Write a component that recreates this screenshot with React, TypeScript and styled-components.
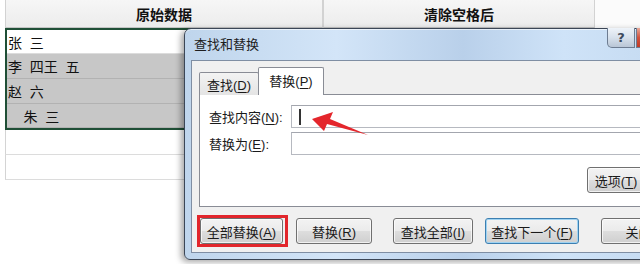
import React from 'react'
import styled, { createGlobalStyle, css } from 'styled-components'

const FONT = `"Liberation Sans", "Noto Sans CJK SC", sans-serif`
const FRAME_BORDER = '#3b4656'
const TAB_BORDER = '#898c95'

const GlobalStyle = createGlobalStyle`
  html, body {
    margin: 0;
    padding: 0;
    background: #ffffff;
  }
  body {
    font-family: ${FONT};
    color: #1a1a1a;
  }
`

const Page = styled.div`
  position: relative;
  width: 640px;
  height: 264px;
  overflow: hidden;
  background: #ffffff;
`

/* ---------- spreadsheet behind the dialog ---------- */

const Sheet = styled.div`
  display: flex;
  padding-left: 5px;
`

const Column = styled.div<{ $width: number }>`
  display: flex;
  flex-direction: column;
  width: ${p => p.$width}px;
`

const HeaderCell = styled.div`
  height: 28px;
  box-sizing: border-box;
  display: flex;
  align-items: center;
  justify-content: center;
  background: linear-gradient(#f6f6f6, #ececec);
  border-left: 1px solid #d2d2d2;
  border-right: 1px solid #d2d2d2;
  border-bottom: 1px solid #c4c4c4;
  font-size: 14px;
  font-weight: bold;
  color: #111;
`

const Selection = styled.div`
  border: 2px solid #1f4f36;
  display: flex;
  flex-direction: column;
`

const Cell = styled.div<{ $selected?: boolean; $height?: number }>`
  height: ${p => p.$height || 25}px;
  box-sizing: border-box;
  display: flex;
  align-items: center;
  padding-left: 1px;
  white-space: pre;
  font-size: 14px;
  color: #111;
  background: ${p => (p.$selected ? '#c7c7c7' : '#ffffff')};
  border-bottom: 1px solid ${p => (p.$selected ? '#b2b2b2' : '#dcdcdc')};
`

const EmptyCell = styled.div`
  height: 25px;
  box-sizing: border-box;
  border-left: 1px solid #d4d4d4;
  border-bottom: 1px solid #dcdcdc;
`

const Filler = styled.div`
  flex: 1;
  background: #fbfbfb;
  height: 28px;
`

/* ---------- find & replace dialog ---------- */

const Dialog = styled.div`
  position: absolute;
  left: 184px;
  top: 28px;
  width: 507px;
  height: 232px;
  box-sizing: border-box;
  display: flex;
  flex-direction: column;
  padding: 0 6px 6px 6px;
  border: 1px solid ${FRAME_BORDER};
  border-radius: 7px 7px 6px 6px;
  background: linear-gradient(90deg, #bfd5ec 0%, #d3e5f8 30%, #b9d0ea 55%, #cfe3f8 75%, #c2d8ef 100%);
  box-shadow: -3px 2px 6px rgba(0, 0, 0, 0.35), inset 0 1px 0 rgba(255, 255, 255, 0.6);
`

const TitleBar = styled.div`
  height: 31px;
  display: flex;
  align-items: flex-start;
  justify-content: space-between;
  padding-left: 3px;
`

const Title = styled.span`
  font-size: 13px;
  line-height: 31px;
  color: #1e1e1e;
`

const CaptionButtons = styled.div`
  display: flex;
  margin-top: -1px;
  margin-right: 5px;
`

const CaptionButton = styled.div<{ $close?: boolean }>`
  height: 20px;
  box-sizing: border-box;
  display: flex;
  align-items: center;
  justify-content: center;
  border: 1px solid #6d7c91;
  border-top: none;
  font-family: "DejaVu Sans", sans-serif;
  font-size: 13px;
  font-weight: bold;
  color: #3d4a5c;
  ${p =>
    p.$close
      ? css`
          width: 43px;
          margin-left: 1px;
          border-radius: 0 0 5px 0;
          background: linear-gradient(#e8a898, #d0533f 50%, #c13a26);
        `
      : css`
          width: 28px;
          border-radius: 0 0 0 5px;
          background: linear-gradient(#eef3f9, #d7e1ec 50%, #b9c6d6);
        `}
`

const Client = styled.div`
  flex: 1;
  display: flex;
  flex-direction: column;
  background: #f0f0f0;
  border: 1px solid #7f8ea3;
  padding: 7px 7px 0 7px;
  font-size: 13px;
`

const TabStrip = styled.div`
  display: flex;
  align-items: flex-end;
  height: 27px;
  margin-bottom: -1px;
  position: relative;
  z-index: 1;
`

const Tab = styled.div<{ $active?: boolean }>`
  box-sizing: border-box;
  display: flex;
  align-items: center;
  justify-content: center;
  border: 1px solid ${TAB_BORDER};
  border-radius: 2px 2px 0 0;
  ${p =>
    p.$active
      ? css`
          width: 66px;
          height: 28px;
          margin-left: -1px;
          border-bottom: none;
          background: #ffffff;
          padding-bottom: 2px;
        `
      : css`
          width: 60px;
          height: 23px;
          border-bottom: none;
          background: linear-gradient(#f3f3f3, #e4e4e4);
        `}
`

const Panel = styled.div`
  height: 113px;
  box-sizing: border-box;
  display: flex;
  flex-direction: column;
  background: #ffffff;
  border: 1px solid ${TAB_BORDER};
  padding: 10px 30px 0 9px;
`

const FieldRow = styled.div<{ $gap?: number }>`
  display: flex;
  align-items: center;
  margin-top: ${p => p.$gap || 0}px;
`

const Label = styled.span`
  width: 82px;
  flex-shrink: 0;
`

const Input = styled.div`
  flex: 1;
  height: 23px;
  margin-right: -21px;
  box-sizing: border-box;
  display: flex;
  align-items: center;
  padding-left: 7px;
  background: #ffffff;
  border: 1px solid #b6b9c0;
  border-top-color: #a3a6ae;
`

const Caret = styled.span`
  width: 2px;
  height: 16px;
  background: #333;
`

const OptionsRow = styled.div`
  display: flex;
  justify-content: flex-end;
  margin-top: 12px;
`

const ButtonRow = styled.div`
  display: flex;
  align-items: center;
  margin-top: 8px;
`

const Button = styled.div<{ $width: number; $gap?: number; $focused?: boolean }>`
  width: ${p => p.$width}px;
  height: 26px;
  margin-left: ${p => p.$gap || 0}px;
  box-sizing: border-box;
  display: flex;
  align-items: center;
  justify-content: center;
  white-space: nowrap;
  border: 1px solid #707070;
  border-radius: 3px;
  background: linear-gradient(#f3f3f3 0%, #ebebeb 48%, #dddddd 52%, #cfcfcf 100%);
  box-shadow: inset 0 0 0 1px rgba(255, 255, 255, 0.7);
  color: #1a1a1a;
  ${p =>
    p.$focused &&
    css`
      border-color: #3c7fb1;
      box-shadow: inset 0 0 0 1px #9fd3f2;
    `}
`

/* red annotation box drawn round the "replace all" button */
const Highlight = styled.div`
  display: flex;
  margin-left: -2px;
  padding-right: 2px;
  border: 3px solid #e2262c;
`

const Key = styled.span`
  text-decoration: underline;
  text-underline-offset: 2px;
`

const Arrow = styled.svg`
  position: absolute;
  left: 305px;
  top: 106px;
  width: 70px;
  height: 34px;
`

const label = (text: string, key: string, suffix = '') => (
  <span>
    {text}(<Key>{key}</Key>){suffix}
  </span>
)

const rows = [
  { text: '张  三', selected: false, height: 24 },
  { text: '李  四王  五', selected: true, height: 25 },
  { text: '赵  六', selected: true, height: 25 },
  { text: '    朱  三', selected: true, height: 24 },
]

export default function App() {
  return (
    <Page>
      <GlobalStyle />
      <Sheet>
        <Column $width={318}>
          <HeaderCell>原始数据</HeaderCell>
          <Selection>
            {rows.map((r, i) => (
              <Cell key={i} $selected={r.selected} $height={r.height}>
                {r.text}
              </Cell>
            ))}
          </Selection>
          <EmptyCell />
          <EmptyCell />
        </Column>
        <Column $width={272}>
          <HeaderCell>清除空格后</HeaderCell>
        </Column>
        <Filler />
      </Sheet>

      <Dialog>
        <TitleBar>
          <Title>查找和替换</Title>
          <CaptionButtons>
            <CaptionButton>?</CaptionButton>
            <CaptionButton $close />
          </CaptionButtons>
        </TitleBar>
        <Client>
          <TabStrip>
            <Tab>{label('查找', 'D')}</Tab>
            <Tab $active>{label('替换', 'P')}</Tab>
          </TabStrip>
          <Panel>
            <FieldRow>
              <Label>{label('查找内容', 'N', ':')}</Label>
              <Input>
                <Caret />
              </Input>
            </FieldRow>
            <FieldRow $gap={4}>
              <Label>{label('替换为', 'E', ':')}</Label>
              <Input />
            </FieldRow>
            <OptionsRow>
              <Button $width={58}>{label('选项', 'T')}</Button>
            </OptionsRow>
          </Panel>
          <ButtonRow>
            <Highlight>
              <Button $width={83}>{label('全部替换', 'A')}</Button>
            </Highlight>
            <Button $width={76} $gap={8}>
              {label('替换', 'R')}
            </Button>
            <Button $width={80} $gap={21}>
              {label('查找全部', 'I')}
            </Button>
            <Button $width={94} $gap={12} $focused>
              {label('查找下一个', 'F')}
            </Button>
            <Button $width={75} $gap={22}>
              关闭
            </Button>
          </ButtonRow>
        </Client>
      </Dialog>

      <Arrow viewBox="0 0 70 34">
        <polygon points="7,13 28,6 25,13 63,29 22,18 19,25" fill="#e4262c" />
      </Arrow>
    </Page>
  )
}
